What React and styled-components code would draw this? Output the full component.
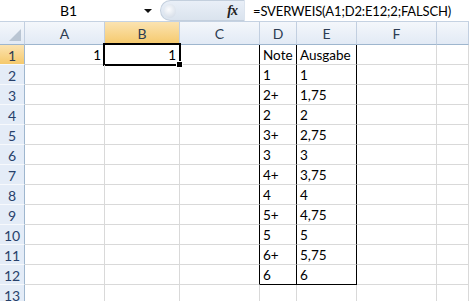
import styled, { createGlobalStyle, css } from "styled-components";

const GlobalStyle = createGlobalStyle`
  body {
    margin: 0;
    background: #fff;
    overflow: hidden;
    font-family: "Lato", "Liberation Sans", sans-serif;
  }
`;

const Window = styled.div`
  width: 469px;
  height: 301px;
  overflow: hidden;
  background: #fff;
`;

const FormulaBar = styled.div`
  display: flex;
  height: 21px;
  border-bottom: 1px solid #c5d2e2;
  background: #fff;
`;

const NameBox = styled.div`
  position: relative;
  flex: 0 0 157px;
  display: flex;
  align-items: center;
  justify-content: center;
  font-size: 14px;
  color: #000;
  padding-right: 20px;
  box-sizing: border-box;
`;

const Arrow = styled.span`
  position: absolute;
  right: 5px;
  top: 9px;
  border-left: 4px solid transparent;
  border-right: 4px solid transparent;
  border-top: 4px solid #111;
`;

const FxPill = styled.div`
  flex: 0 0 84px;
  margin-left: 3px;
  display: flex;
  align-items: center;
  justify-content: space-between;
  padding: 0 4px 0 3px;
  box-sizing: border-box;
  border: 1px solid #c3cfdd;
  border-right: none;
  border-radius: 11px 0 0 11px;
  background: linear-gradient(#e9eff7, #dae3ee);
`;

const Grip = styled.span`
  width: 12px;
  height: 14px;
  border-radius: 50%;
  background: radial-gradient(circle at 40% 40%, #fbfcfe, #cbd5e2);
`;

const Fx = styled.span`
  font-family: "Liberation Serif", serif;
  font-style: italic;
  font-weight: bold;
  font-size: 14px;
  color: #222;
  letter-spacing: -1px;
  padding-right: 3px;
`;

const FormulaText = styled.div`
  flex: 1;
  min-width: 0;
  display: flex;
  align-items: center;
  padding-left: 8px;
  font-size: 13px;
  letter-spacing: -0.15px;
  white-space: nowrap;
  border-left: 1px solid #dce4ee;
  color: #000;
`;

const Sheet = styled.div`
  display: grid;
  grid-template-columns: 25px 80px 75px 80px 37px 60px 80px 1fr;
  grid-template-rows: 23px;
  grid-auto-rows: 20px;
`;

const Header = styled.div`
  box-sizing: border-box;
  display: flex;
  align-items: center;
  justify-content: center;
  font-size: 14px;
  color: #2d3c52;
  border-right: 1px solid #c2cfe0;
  border-bottom: 1px solid #9eb6ce;
  background: linear-gradient(#f4f7fb, #e2eaf5);
  ${(p) =>
    p.$active &&
    css`
      background: linear-gradient(#fbe3b1, #f5c96c);
      border-bottom-color: #e3a53c;
    `}
`;

const Corner = styled(Header)`
  position: relative;
  &::after {
    content: "";
    position: absolute;
    right: 3px;
    bottom: 3px;
    width: 0;
    height: 0;
    border-left: 12px solid transparent;
    border-bottom: 12px solid #b9c5d3;
  }
`;

const RowHead = styled.div`
  box-sizing: border-box;
  display: flex;
  align-items: center;
  justify-content: center;
  padding-top: 1px;
  font-size: 14px;
  color: #27416b;
  background: #e4ecf7;
  border-right: 1px solid #9eb6ce;
  border-bottom: 1px solid #f7f9fc;
  ${(p) =>
    p.$active &&
    css`
      background: linear-gradient(#fbe3b1, #f5c96c);
      color: #2d3c52;
    `}
`;

const Cell = styled.div`
  position: relative;
  box-sizing: border-box;
  display: flex;
  align-items: center;
  justify-content: ${(p) => (p.$right ? "flex-end" : "flex-start")};
  padding: 1px 3px 0 3px;
  font-size: 13.5px;
  color: #000;
  white-space: nowrap;
  border-right: 1px solid ${(p) => (p.$edgeRight ? "#000" : "#d9d9d9")};
  border-bottom: 1px solid ${(p) => (p.$edgeBottom ? "#000" : "#d9d9d9")};
  ${(p) =>
    p.$selected &&
    css`
      &::after {
        content: "";
        position: absolute;
        left: -2px;
        top: -2px;
        right: -2px;
        bottom: -2px;
        border: 2px solid #000;
      }
      &::before {
        content: "";
        position: absolute;
        right: -4px;
        bottom: -4px;
        width: 5px;
        height: 5px;
        background: #000;
        border: 1px solid #fff;
        z-index: 2;
      }
    `}
`;

const columns = ["A", "B", "C", "D", "E", "F", ""];

const table = [
  ["Note", "Ausgabe"],
  ["1", "1"],
  ["2+", "1,75"],
  ["2", "2"],
  ["3+", "2,75"],
  ["3", "3"],
  ["4+", "3,75"],
  ["4", "4"],
  ["5+", "4,75"],
  ["5", "5"],
  ["6+", "5,75"],
  ["6", "6"],
];

const rowCount = 13;

export default function App() {
  const rows = [];
  for (let r = 1; r <= rowCount; r++) {
    const inTable = r <= table.length;
    const last = r === table.length;
    const pair = table[r - 1] || ["", ""];
    rows.push(
      <RowHead key={`h${r}`} $active={r === 1}>
        {r}
      </RowHead>
    );
    columns.forEach((col, i) => {
      let text = "";
      let right = false;
      if (r === 1 && (col === "A" || col === "B")) {
        text = "1";
        right = true;
      }
      if (col === "D") text = pair[0];
      if (col === "E") text = pair[1];
      rows.push(
        <Cell
          key={`${col}${r}-${i}`}
          $right={right}
          $selected={r === 1 && col === "B"}
          $edgeRight={inTable && (col === "C" || col === "D" || col === "E")}
          $edgeBottom={last && (col === "D" || col === "E")}
        >
          {text}
        </Cell>
      );
    });
  }

  return (
    <Window>
      <GlobalStyle />
      <FormulaBar>
        <NameBox>
          B1
          <Arrow />
        </NameBox>
        <FxPill>
          <Grip />
          <Fx>fx</Fx>
        </FxPill>
        <FormulaText>=SVERWEIS(A1;D2:E12;2;FALSCH)</FormulaText>
      </FormulaBar>
      <Sheet>
        <Corner />
        {columns.map((c, i) => (
          <Header key={i} $active={c === "B"}>
            {c}
          </Header>
        ))}
        {rows}
      </Sheet>
    </Window>
  );
}
